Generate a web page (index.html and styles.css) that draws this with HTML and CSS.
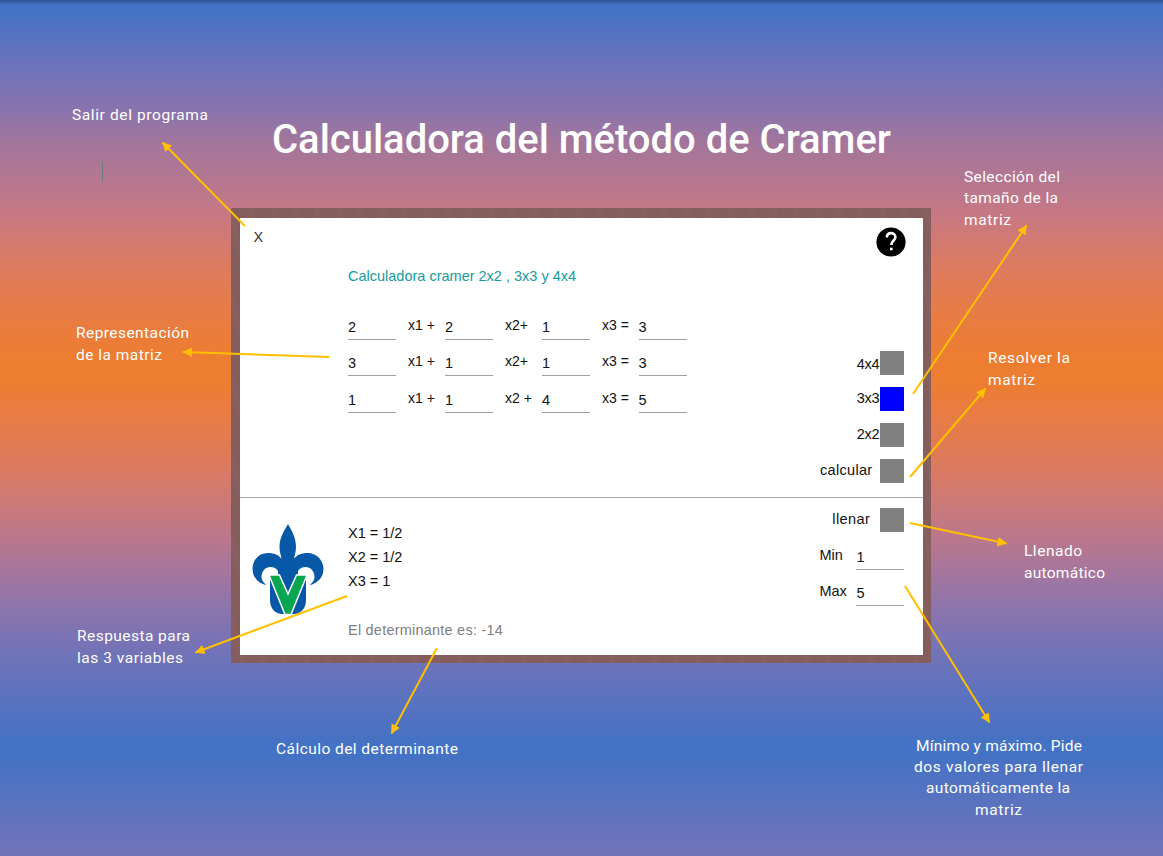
FILE: index.html
```html
<!DOCTYPE html>
<html lang="es">
<head>
<meta charset="utf-8">
<title>Calculadora del método de Cramer</title>
<link rel="stylesheet" href="styles.css">
</head>
<body>
<main class="page">
  <h1 class="title"><svg width="640" height="60"><text x="11" y="43" textLength="619">Calculadora del método de Cramer</text></svg></h1>
  <section class="frame">
    <div class="app">
      <div class="top">
        <header class="bar">
          <span class="close">X</span>
          <svg class="help" viewBox="0 0 30 30"><circle cx="15" cy="15" r="14.6"/><path d="M10.800 10.500C10.900 7.500 12.600 6.100 15 6.100s4.400 1.500 4.400 4.100c0 3.100-4.100 3.600-4.100 7.700"/><rect x="14" y="20.700" width="2.600" height="2.600"/></svg>
        </header>
        <div class="body">
          <div class="system">
            <h2 class="heading">Calculadora cramer 2x2 , 3x3 y 4x4</h2>
            <div class="equations">
              <span class="field">2</span><span class="term">x1 +</span><span class="field">2</span><span class="term">x2+</span><span class="field">1</span><span class="term">x3 =</span><span class="field">3</span>
              <span class="field">3</span><span class="term">x1 +</span><span class="field">1</span><span class="term">x2+</span><span class="field">1</span><span class="term">x3 =</span><span class="field">3</span>
              <span class="field">1</span><span class="term">x1 +</span><span class="field">1</span><span class="term">x2 +</span><span class="field">4</span><span class="term">x3 =</span><span class="field">5</span>
            </div>
          </div>
          <div class="controls">
            <div class="control"><span>4x4</span><i class="box"></i></div>
            <div class="control raised"><span>3x3</span><i class="box selected"></i></div>
            <div class="control raised"><span>2x2</span><i class="box"></i></div>
            <div class="control wide"><span>calcular</span><i class="box"></i></div>
          </div>
        </div>
      </div>
      <div class="bottom">
        <svg class="logo" viewBox="0 0 72 92">
          <path class="blue" d="M36 0C32 7 27.500 14 27.500 23c0 5 1.500 8 2 12C27 31 22 29 16 29 6 29 .5 37 .5 45c0 9 7 15 14 16-3-2-5-5-5-8 0-6 4-10 9-10 5 0 8 3 9 8h17c1-5 4-8 9-8 5 0 9 4 9 10 0 3-2 6-5 8 7-1 14-7 14-16 0-8-6-16-16-16-6 0-11 2-13.500 6 .5-4 2-7 2-12C44 14 40 7 36 0z"/>
          <path class="blue" d="M18 53h36v23c0 9-6 14-12 14H30c-6 0-12-5-12-14z"/>
          <path class="blue" d="M26 47h20v17H26z"/>
          <path class="green" d="M17 51h10.500L36 70l8.500-19H55L39 90.500h-6z"/>
        </svg>
        <div class="answers">
          <p>X1 = 1/2</p><p>X2 = 1/2</p><p>X3 = 1</p>
          <p class="determinant">El determinante es: -14</p>
        </div>
        <div class="fill">
          <div class="control fill-button"><span>llenar</span><i class="box"></i></div>
          <div class="limit"><span>Min</span><span class="field">1</span></div>
          <div class="limit"><span>Max</span><span class="field">5</span></div>
        </div>
      </div>
    </div>
  </section>
  <svg class="notes" viewBox="0 0 1163 856">
    <defs><marker id="arrow" viewBox="0 0 9 9" refX="8.500" refY="4.500" markerWidth="9.500" markerHeight="9.500" markerUnits="userSpaceOnUse" orient="auto"><path d="M0 0L9 4.500L0 9z"/></marker></defs>
    <path class="caret" d="M102.500 162v19"/>
    <g class="arrows">
      <path d="M245 226L162.500 142.500"/><path d="M329 357L183 352"/><path d="M347 596L195.500 652.500"/><path d="M437 648L391.500 733.500"/>
      <path d="M913 394L1026.500 225.500"/><path d="M910 477L985.500 388.500"/><path d="M910 523L1006.500 543.500"/><path d="M905 586L989.500 722.500"/>
    </g>
    <g class="labels">
      <text x="72" y="120" textLength="136">Salir del programa</text>
      <text x="76" y="338" textLength="113">Representación</text><text x="76" y="360" textLength="86">de la matriz</text>
      <text x="77" y="641" textLength="113">Respuesta para</text><text x="77" y="663" textLength="106">las 3 variables</text>
      <text x="276" y="754" textLength="182">Cálculo del determinante</text>
      <text x="964" y="182" textLength="96">Selección del</text><text x="964" y="203" textLength="94">tamaño de la</text><text x="964" y="225" textLength="47">matriz</text>
      <text x="988" y="363" textLength="82">Resolver la</text><text x="988" y="385" textLength="47">matriz</text>
      <text x="1024" y="556" textLength="58">Llenado</text><text x="1024" y="578" textLength="81">automático</text>
      <text x="916" y="751" textLength="166">Mínimo y máximo. Pide</text><text x="914" y="772" textLength="169">dos valores para llenar</text><text x="926" y="793" textLength="144">automáticamente la</text><text x="975" y="815" textLength="47">matriz</text>
    </g>
  </svg>
</main>
</body>
</html>
```
FILE: styles.css
```css
* { box-sizing: border-box; }
body { margin: 0; }
.page {
  position: relative;
  width: 1163px;
  height: 856px;
  padding-top: 110px;
  overflow: hidden;
  background:
    linear-gradient(#2f528f, rgba(47, 82, 143, 0) 5px),
    linear-gradient(#4472c4 12px, #6072be 49px, #7573b6 80px, #8974ae 109px, #a3769b 144px, #b67790 182px, #c57884 212px, #d27a72 240px, #df7b5a 275px, #e87c43 318px, #ed7d31 355px, #ed7d31 382px, #e77c48 422px, #dd7a5c 461px, #d27a70 490px, #c07886 528px, #a9769a 566px, #9075aa 602px, #7873b5 641px, #6a73ba 667px, #5672c0 708px, #4472c4 744px, #4472c4 755px, #5b73bf 805px, #7273b8 856px);
}
.title { width: 640px; height: 60px; margin: 0 0 38px 261px; font-size: 0; }
.title text { font: 500 40px Roboto, sans-serif; fill: #fff; }
.frame {
  width: 700px;
  height: 455px;
  margin-left: 231px;
  padding: 9.500px 8px 8px 8.500px;
  background: repeating-linear-gradient(75deg, #865d5d 0 7px, #88605f 11px, #845c5c 17px, #865d5d 21px);
}
.app {
  display: flex;
  flex-direction: column;
  height: 437px;
  background: #fff;
  color: #111;
  font: 14.500px/18px "Liberation Sans", Arial, sans-serif;
}
.top { height: 280px; border-bottom: 1px solid #a3a6ad; }
.bar { display: flex; justify-content: space-between; height: 48px; padding: 10px 17px 0 14px; }
.close { color: #333; }
.help { width: 30px; height: 30px; margin-top: -1px; }
.help path { fill: none; stroke: #fff; stroke-width: 2.600; }
.help rect { fill: #fff; }
.body { display: flex; justify-content: space-between; padding: 0 18.600px 0 108.500px; }
.heading { margin: 1.500px 0 31.200px; font-size: 14.500px; line-height: 18px; font-weight: 400; color: #159c9d; white-space: nowrap; }
.equations { display: grid; grid-template-columns: 48px 49px 48px 49px 48px 48.500px 48px; grid-auto-rows: 36.200px; }
.field { width: 48px; height: 24px; padding-top: 2px; border-bottom: 1px solid #9c9fa8; font-size: 14.500px; }
.term { padding-left: 12px; font-size: 14px; white-space: nowrap; }
.controls { width: 90px; padding-top: 85px; }
.control { display: flex; justify-content: flex-end; gap: 1px; height: 36.300px; }
.control span { padding-top: 4px; letter-spacing: -.2px; }
.raised span { padding-top: 2px; }
.box { width: 24px; height: 24px; background: #808080; }
.selected { background: #00f; }
.wide { gap: 8px; }
.wide span { padding-top: 2px; letter-spacing: .3px; }
.bottom { display: flex; flex: 1; padding: 0 18.600px 0 12px; }
.logo { width: 72px; height: 92px; margin-top: 26px; }
.blue { fill: #0759a8; }
.green { fill: #08a651; stroke: #fff; stroke-width: 1.500; }
.answers { padding: 26px 0 0 24.500px; }
.answers p { height: 24.100px; margin: 0; white-space: nowrap; }
.answers .determinant { margin-top: 25px; color: #808080; letter-spacing: .22px; }
.fill { width: 85px; margin-left: auto; padding-top: 10px; }
.fill-button { gap: 10px; }
.fill-button span { padding-top: 2px; letter-spacing: .45px; }
.limit { display: flex; justify-content: space-between; height: 36.200px; padding-top: 2px; }
.notes { position: absolute; inset: 0; width: 1163px; height: 856px; }
.arrows path { fill: none; stroke: #ffc000; stroke-width: 2; marker-end: url(#arrow); }
#arrow path { fill: #ffc000; }
.caret { stroke: #677e79; stroke-width: 1; }
.labels { font: 400 15.500px Roboto, sans-serif; fill: #fff; }
```
